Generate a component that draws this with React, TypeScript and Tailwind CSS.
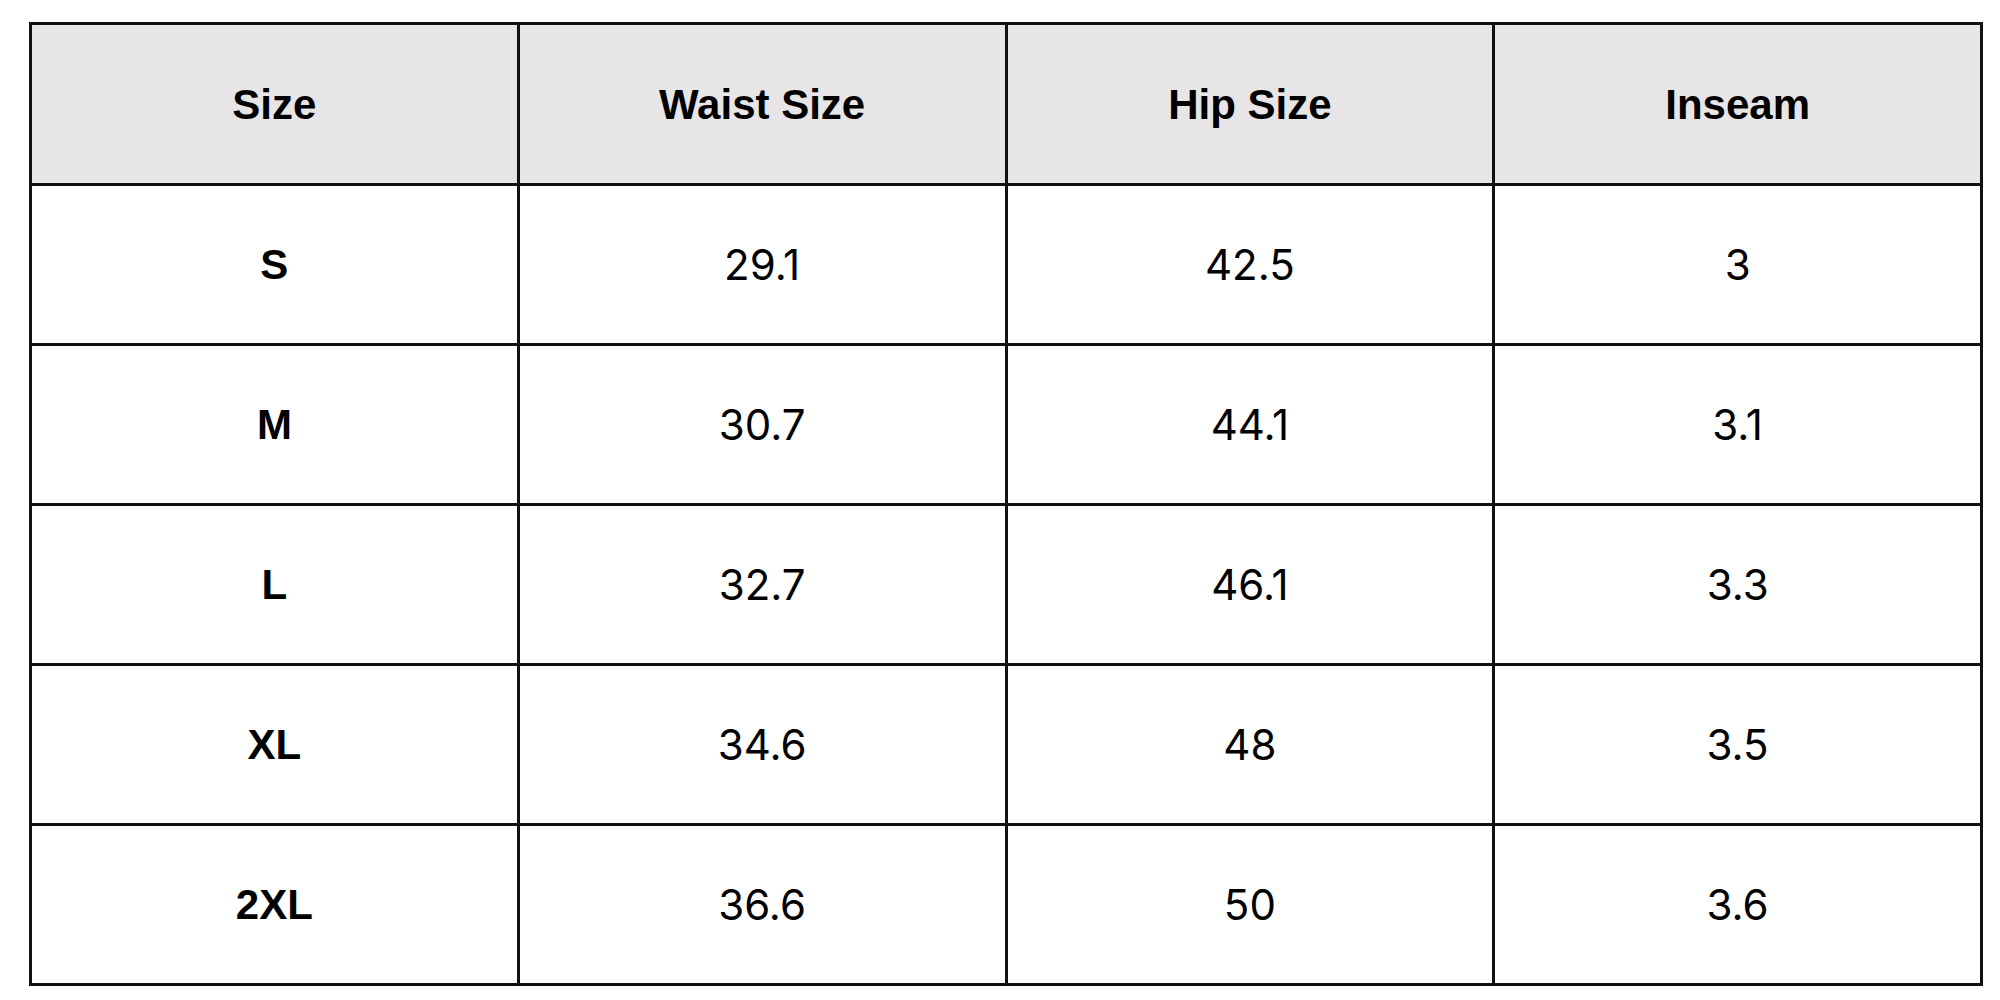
const headers = ["Size", "Waist Size", "Hip Size", "Inseam"];

const rows: [string, string, string, string][] = [
  ["S", "29.1", "42.5", "3"],
  ["M", "30.7", "44.1", "3.1"],
  ["L", "32.7", "46.1", "3.3"],
  ["XL", "34.6", "48", "3.5"],
  ["2XL", "36.6", "50", "3.6"],
];

export default function App() {
  return (
    <div className="min-h-screen bg-white pl-[29px] pt-[22px]">
      <table className="w-[1954px] table-fixed border-collapse border-[3px] border-[#111]">
        <thead>
          <tr className="h-[161px] bg-[#e7e5e6]">
            {headers.map((h) => (
              <th
                key={h}
                className="border-[3px] border-[#111] text-center align-middle font-['Liberation_Sans',Arial,sans-serif] text-[42px] font-bold text-black"
              >
                {h}
              </th>
            ))}
          </tr>
        </thead>
        <tbody>
          {rows.map((row) => (
            <tr key={row[0]} className="h-[160px] bg-white">
              {row.map((cell, i) => (
                <td
                  key={i}
                  className={
                    i === 0
                      ? "border-[3px] border-[#111] text-center align-middle font-['Liberation_Sans',Arial,sans-serif] text-[42px] font-bold text-black"
                      : "border-[3px] border-[#111] text-center align-middle font-['Inter',sans-serif] text-[42px] font-normal text-black"
                  }
                >
                  {cell}
                </td>
              ))}
            </tr>
          ))}
        </tbody>
      </table>
    </div>
  );
}
